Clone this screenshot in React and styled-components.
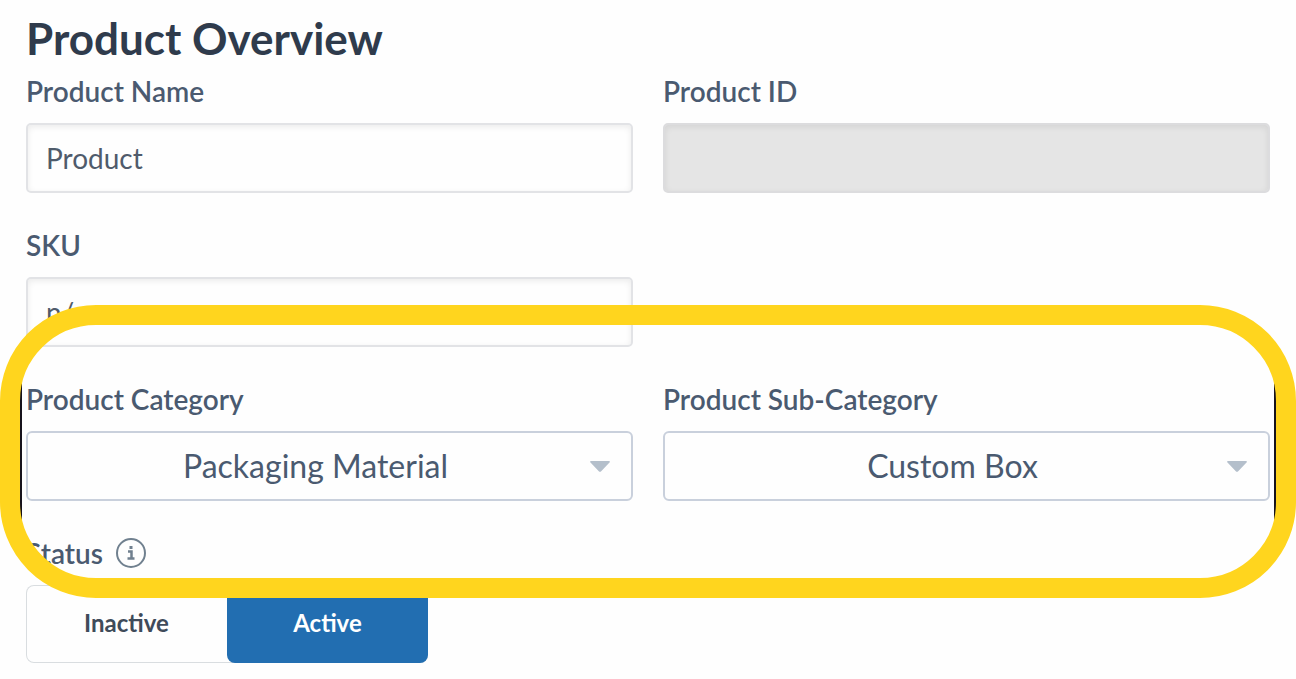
import React, { useState } from 'react';
import styled, { createGlobalStyle } from 'styled-components';

const GlobalStyle = createGlobalStyle`
  *,
  *::before,
  *::after {
    box-sizing: border-box;
  }

  body {
    margin: 0;
    background-color: #fefefe;
    color: #4a5a70;
    font-family: Lato, 'Open Sans', sans-serif;
  }

  button,
  input,
  select {
    font-family: inherit;
    margin: 0;
  }
`;

const Page = styled.main`
  padding: 14px 26px 16px;
  overflow: hidden;
`;

const Title = styled.h1`
  margin: 0 0 14px;
  font-size: 44px;
  line-height: 48px;
  font-weight: 700;
  color: #2f3b4c;
`;

const Form = styled.form`
  display: flex;
  flex-direction: column;
  gap: 37px;
`;

const Row = styled.div`
  display: grid;
  grid-template-columns: 1fr 1fr;
  gap: 30px;
`;

const Field = styled.div`
  display: flex;
  flex-direction: column;
  gap: 17px;
`;

const Label = styled.label`
  font-size: 28px;
  line-height: 30px;
  font-weight: 600;
  color: #4a5a70;
`;

const TextInput = styled.input`
  width: 100%;
  height: 70px;
  padding: 0 18px;
  border: 2px solid #e2e3e6;
  border-radius: 5px;
  background-color: #fefefe;
  box-shadow: inset 0 2px 6px rgba(0, 0, 0, 0.08);
  font-size: 28px;
  color: #4f5b6b;

  &:disabled {
    border-color: #dcdcde;
    background-color: #e5e5e5;
  }
`;

const SelectBox = styled.div`
  position: relative;
`;

const Select = styled.select`
  display: block;
  width: 100%;
  height: 70px;
  padding: 0 48px 2px 20px;
  border: 2px solid #c9d0dc;
  border-radius: 6px;
  background-color: #fefefe;
  appearance: none;
  font-size: 32px;
  text-align: center;
  text-align-last: center;
  color: #4a5a70;
`;

const Arrow = styled.svg`
  position: absolute;
  top: 30px;
  right: 23px;
  width: 20px;
  height: 11px;
  fill: #b4bfcb;
  pointer-events: none;
`;

const Highlighted = styled.div`
  position: relative;
  display: flex;
  flex-direction: column;
  gap: 37px;
`;

const Highlight = styled.div`
  position: absolute;
  top: -79px;
  right: -26px;
  bottom: -30px;
  left: -26px;
  pointer-events: none;

  /* dark edges just inside the ring */
  &::before {
    content: '';
    position: absolute;
    inset: 78px 20px;
    border: solid #17131c;
    border-width: 0 2px;
  }

  &::after {
    content: '';
    position: absolute;
    inset: 0;
    border: 20px solid #ffd51e;
    border-radius: 96px;
  }
`;

const StatusHeading = styled.div`
  display: flex;
  align-items: center;
  gap: 12px;
  height: 30px;
`;

const InfoIcon = styled.svg`
  width: 32px;
  height: 32px;
  fill: none;
  stroke: #70808f;
  stroke-width: 2;
`;

const Toggle = styled.div`
  display: flex;
  align-self: flex-start;
  margin-top: -20px;
  border-radius: 8px;
  background-color: #fefefe;
  box-shadow: inset 0 0 0 1px #d9dde0;
`;

const ToggleButton = styled.button`
  width: 201px;
  height: 78px;
  padding: 0 0 4px;
  border: 0;
  border-radius: 8px;
  background-color: ${({ $active }) => ($active ? '#226eb1' : 'transparent')};
  color: ${({ $active }) => ($active ? '#fff' : '#3f4b5a')};
  font-size: 24px;
  font-weight: 700;
  cursor: pointer;
`;

function SelectField({ id, label, options }) {
  return (
    <Field>
      <Label htmlFor={id}>{label}</Label>
      <SelectBox>
        <Select id={id}>
          {options.map((option) => (
            <option key={option}>{option}</option>
          ))}
        </Select>
        <Arrow viewBox="0 0 20 11" aria-hidden="true">
          <path d="M1 0h18c1 0 1.200.8.500 1.500l-8.300 8.800c-.7.700-1.700.7-2.400 0L.5 1.500C-.2.800 0 0 1 0z" />
        </Arrow>
      </SelectBox>
    </Field>
  );
}

function App() {
  const [status, setStatus] = useState('Active');

  return (
    <React.Fragment>
      <GlobalStyle />
      <Page>
        <Title>Product Overview</Title>
        <Form>
          <Row>
            <Field>
              <Label htmlFor="name">Product Name</Label>
              <TextInput id="name" defaultValue="Product" />
            </Field>
            <Field>
              <Label htmlFor="product-id">Product ID</Label>
              <TextInput id="product-id" disabled />
            </Field>
          </Row>
          <Row>
            <Field>
              <Label htmlFor="sku">SKU</Label>
              <TextInput id="sku" defaultValue="n/a" />
            </Field>
          </Row>
          <Highlighted>
            <Row>
              <SelectField
                id="category"
                label="Product Category"
                options={['Packaging Material']}
              />
              <SelectField
                id="sub-category"
                label="Product Sub-Category"
                options={['Custom Box']}
              />
            </Row>
            <StatusHeading>
              <Label as="span" id="status">
                Status
              </Label>
              <InfoIcon viewBox="0 0 32 32" aria-hidden="true">
                <circle cx="16" cy="16" r="14" />
                <path d="M13 14.500h3.500V21M12.500 21.500h7" strokeWidth="2.500" />
                <path d="M14.500 10.500h3" strokeWidth="3" />
              </InfoIcon>
            </StatusHeading>
            <Highlight />
          </Highlighted>
          <Toggle role="group" aria-labelledby="status">
            {['Inactive', 'Active'].map((option) => (
              <ToggleButton
                key={option}
                type="button"
                aria-pressed={status === option}
                $active={status === option}
                onClick={() => setStatus(option)}
              >
                {option}
              </ToggleButton>
            ))}
          </Toggle>
        </Form>
      </Page>
    </React.Fragment>
  );
}

export default App;
